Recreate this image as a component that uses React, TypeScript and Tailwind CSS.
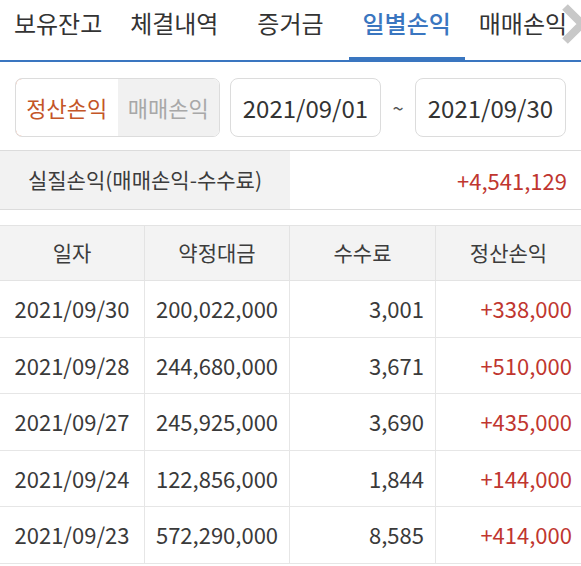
import React from 'react';

const tabs = ['보유잔고', '체결내역', '증거금', '일별손익', '매매손익'];

const rows = [
  { date: '2021/09/30', amount: '200,022,000', fee: '3,001', pl: '+338,000' },
  { date: '2021/09/28', amount: '244,680,000', fee: '3,671', pl: '+510,000' },
  { date: '2021/09/27', amount: '245,925,000', fee: '3,690', pl: '+435,000' },
  { date: '2021/09/24', amount: '122,856,000', fee: '1,844', pl: '+144,000' },
  { date: '2021/09/23', amount: '572,290,000', fee: '8,585', pl: '+414,000' },
];

const font = { fontFamily: '"Noto Sans CJK KR", "Noto Sans", sans-serif' };

export default function App() {
  return (
    <div className="h-[566px] w-[581px] overflow-hidden bg-white text-[#363636]" style={font}>
      {/* tab bar */}
      <div className="relative border-b-2 border-[#3a76c0]">
        <div className="grid h-[60px] grid-cols-5">
          {tabs.map((t) => {
            const active = t === '일별손익';
            return (
              <div key={t} className="relative flex items-start justify-center pt-[5px]">
                <span
                  className={`whitespace-nowrap text-[24px] leading-[36px] ${active ? 'font-medium text-[#3a76c0]' : 'text-[#333]'}`}
                >
                  {t}
                </span>
                {active && <div className="absolute bottom-0 left-0 right-0 h-[3px] bg-[#3a76c0]" />}
              </div>
            );
          })}
        </div>
        <svg className="absolute right-[-7px] top-[2px]" width="28" height="44" viewBox="0 0 28 44">
          <path d="M5 5 L22 22 L5 39" fill="none" stroke="#c8c8c8" strokeWidth="8" strokeLinejoin="miter" />
        </svg>
      </div>

      {/* filter row */}
      <div className="flex items-center px-[15px] pt-[16px]">
        <div className="flex h-[59px] w-[205px] overflow-hidden rounded-[7px] border border-[#dcdcdc]">
          <div className="-m-px flex flex-1 items-center justify-center rounded-l-[7px] border border-[#cf6a43] bg-white text-[22px] text-[#c45527]">
            정산손익
          </div>
          <div className="flex flex-1 items-center justify-center bg-[#f1f1f1] text-[22px] text-[#a8a8a8]">
            매매손익
          </div>
        </div>
        <div className="ml-[10px] flex h-[59px] w-[151px] items-center justify-center rounded-[8px] border border-[#dcdcdc] text-[24px] text-[#333]">
          2021/09/01
        </div>
        <div className="flex w-[34px] justify-center text-[20px] text-[#555]">~</div>
        <div className="flex h-[59px] w-[151px] items-center justify-center rounded-[8px] border border-[#dcdcdc] text-[24px] text-[#333]">
          2021/09/30
        </div>
      </div>

      {/* summary */}
      <div className="mt-[13px] flex h-[60px] border-y border-[#dcdcdc]">
        <div className="flex w-[290px] items-center justify-center bg-[#f2f2f2] text-[21px] text-[#3c3c3c]">
          실질손익(매매손익-수수료)
        </div>
        <div className="flex flex-1 items-center justify-end pr-[14px] text-[22px] text-[#c0362f]">+4,541,129</div>
      </div>

      {/* table */}
      <div className="mt-[15px] border-t border-[#e3e3e3]">
        <div className="grid h-[55px] grid-cols-[145px_145px_146px_145px] border-b border-[#e3e3e3] bg-[#f3f3f3] text-[21px] text-[#3c3c3c]">
          <div className="flex items-center justify-center border-r border-[#e3e3e3]">일자</div>
          <div className="flex items-center justify-center border-r border-[#e3e3e3]">약정대금</div>
          <div className="flex items-center justify-center border-r border-[#e3e3e3]">수수료</div>
          <div className="flex items-center justify-center">정산손익</div>
        </div>
        {rows.map((r) => (
          <div
            key={r.date}
            className="grid h-[56.5px] grid-cols-[145px_145px_146px_145px] border-b border-[#e6e6e6] text-[22px] text-[#3a3a3a]"
          >
            <div className="flex items-center justify-center whitespace-nowrap border-r border-[#e6e6e6]">{r.date}</div>
            <div className="flex items-center justify-center whitespace-nowrap border-r border-[#e6e6e6]">{r.amount}</div>
            <div className="flex items-center justify-end border-r border-[#e6e6e6] pr-[11px]">{r.fee}</div>
            <div className="flex items-center justify-end pr-[9px] text-[#c0362f]">{r.pl}</div>
          </div>
        ))}
      </div>
    </div>
  );
}
